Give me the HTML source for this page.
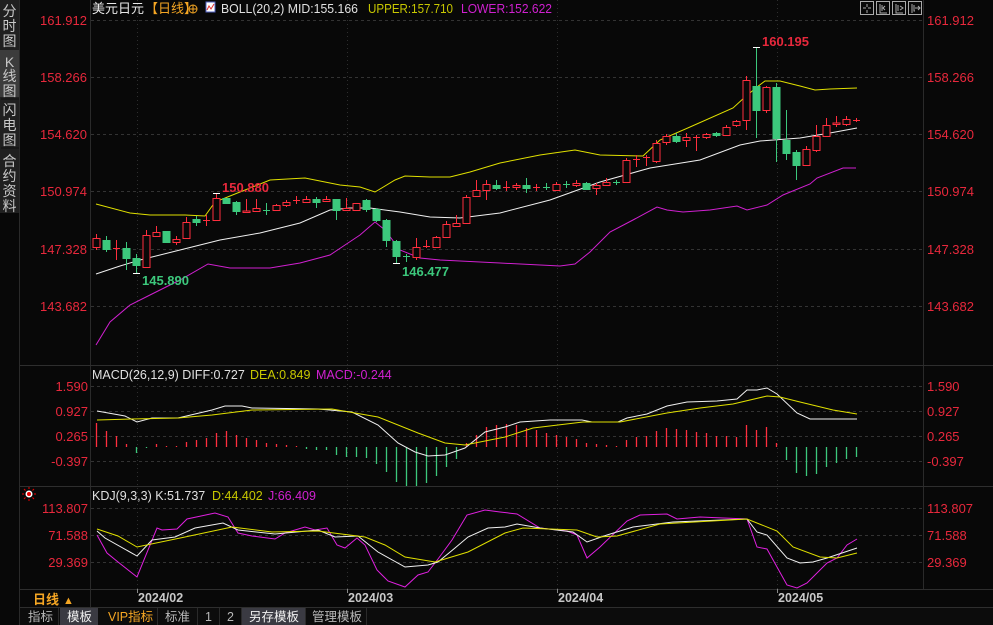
<!DOCTYPE html>
<html><head><meta charset="utf-8">
<style>
html,body{margin:0;padding:0;background:#080808;width:993px;height:625px;overflow:hidden}
svg{display:block}
text{font-family:"Liberation Sans","Noto Sans CJK SC",sans-serif}
</style></head><body>
<svg width="993" height="625" viewBox="0 0 993 625" xmlns="http://www.w3.org/2000/svg">
<rect x="0" y="0" width="993" height="625" fill="#080808"/>
<!-- sidebar -->
<rect x="0" y="0" width="19" height="213" fill="#202020"/>
<rect x="0" y="50" width="19" height="47" fill="#3c3c3c"/>
<g fill="#c8c8c8" font-size="14" text-anchor="middle">
<text x="9.5" y="16">分</text><text x="9.5" y="31">时</text><text x="9.5" y="46">图</text>
<text x="9.5" y="67" font-family="Liberation Mono">K</text><text x="9.5" y="81">线</text><text x="9.5" y="96">图</text>
<text x="9.5" y="115">闪</text><text x="9.5" y="130">电</text><text x="9.5" y="145">图</text>
<text x="9.5" y="166">合</text><text x="9.5" y="181">约</text><text x="9.5" y="196">资</text><text x="9.5" y="211">料</text>
</g>
<line x1="1" y1="99" x2="19" y2="99" stroke="#111"/><line x1="1" y1="148" x2="19" y2="148" stroke="#111"/>
<line x1="19.5" y1="0" x2="19.5" y2="625" stroke="#2a2a2a"/>
<!-- frame lines -->
<line x1="90.5" y1="0" x2="90.5" y2="589" stroke="#2a2a2a"/>
<line x1="923.5" y1="0" x2="923.5" y2="589" stroke="#2a2a2a"/>
<line x1="20" y1="365.5" x2="993" y2="365.5" stroke="#2e2e2e"/>
<line x1="20" y1="486.5" x2="993" y2="486.5" stroke="#2e2e2e"/>
<line x1="20" y1="589.5" x2="993" y2="589.5" stroke="#2e2e2e"/>
<line x1="20" y1="607.5" x2="993" y2="607.5" stroke="#2e2e2e"/>
<!-- grid -->
<g stroke="#333" stroke-dasharray="3,3">
<line x1="91" y1="20.5" x2="922" y2="20.5"/><line x1="91" y1="77.5" x2="922" y2="77.5"/><line x1="91" y1="134.5" x2="922" y2="134.5"/>
<line x1="91" y1="191.5" x2="922" y2="191.5"/><line x1="91" y1="249.5" x2="922" y2="249.5"/><line x1="91" y1="306.5" x2="922" y2="306.5"/>
<line x1="91" y1="386.5" x2="922" y2="386.5"/><line x1="91" y1="411.5" x2="922" y2="411.5"/><line x1="91" y1="436.5" x2="922" y2="436.5"/><line x1="91" y1="461.5" x2="922" y2="461.5"/>
<line x1="91" y1="508.5" x2="922" y2="508.5"/><line x1="91" y1="535.5" x2="922" y2="535.5"/><line x1="91" y1="562.5" x2="922" y2="562.5"/>
</g>
<g stroke="#2e2e2e" stroke-dasharray="1,3">
<line x1="137.5" y1="0" x2="137.5" y2="589"/><line x1="347.5" y1="0" x2="347.5" y2="589"/><line x1="557.5" y1="0" x2="557.5" y2="589"/><line x1="777.5" y1="0" x2="777.5" y2="589"/>
</g>
<!-- header -->
<text x="92" y="13" font-size="13" fill="#e8e8e8">美元日元</text>
<text x="145" y="13" font-size="13" fill="#f5a623">【日线】</text>
<circle cx="193" cy="9" r="4" fill="none" stroke="#f5a623"/><line x1="189" y1="9" x2="197" y2="9" stroke="#f5a623"/><line x1="193" y1="5" x2="193" y2="13" stroke="#f5a623"/>
<rect x="206" y="2" width="9" height="10" fill="#fff" stroke="#5060c0"/><polyline points="207,10 209,6 211,9 214,4" fill="none" stroke="#e03030"/>
<text x="221" y="13" font-size="12.5" fill="#e0e0e0" textLength="137" lengthAdjust="spacingAndGlyphs">BOLL(20,2) MID:155.166</text>
<text x="368" y="13" font-size="12.5" fill="#c8c800" textLength="85" lengthAdjust="spacingAndGlyphs">UPPER:157.710</text>
<text x="461" y="13" font-size="12.5" fill="#d020d0" textLength="91" lengthAdjust="spacingAndGlyphs">LOWER:152.622</text>
<!-- top-right icons -->
<g fill="none" stroke="#aaa">
<rect x="860.5" y="1.5" width="13" height="13"/><rect x="876.5" y="1.5" width="13" height="13"/><rect x="892.5" y="1.5" width="13" height="13"/><rect x="908.5" y="1.5" width="13" height="13"/>
<path d="M867 4v3M867 10v3M863 8h3M868 8h3"/><path d="M880 4v9h7M882 5v6M885 6l-2 2 2 2"/><path d="M896 4v9h7M898 5v6M900 6l3 2-3 2"/><path d="M912 4v9M914 5v6h1M915 8h5M918 6l2 2-2 2"/>
</g>
<!-- left axis labels -->
<g font-size="13" fill="#e8283c" text-anchor="end">
<text x="87" y="25">161.912</text><text x="87" y="82">158.266</text><text x="87" y="139">154.620</text><text x="87" y="196">150.974</text><text x="87" y="254">147.328</text><text x="87" y="311">143.682</text>
<text x="88" y="391">1.590</text><text x="88" y="416">0.927</text><text x="88" y="441">0.265</text><text x="88" y="466">-0.397</text>
<text x="88" y="513">113.807</text><text x="88" y="540">71.588</text><text x="88" y="567">29.369</text>
</g>
<g font-size="13" fill="#e8283c">
<text x="927" y="25">161.912</text><text x="927" y="82">158.266</text><text x="927" y="139">154.620</text><text x="927" y="196">150.974</text><text x="927" y="254">147.328</text><text x="927" y="311">143.682</text>
<text x="927" y="391">1.590</text><text x="927" y="416">0.927</text><text x="927" y="441">0.265</text><text x="927" y="466">-0.397</text>
<text x="927" y="513">113.807</text><text x="927" y="540">71.588</text><text x="927" y="567">29.369</text>
</g>
<!-- BOLL lines -->
<polyline fill="none" stroke="#e0e000" stroke-width="1" points="96,204 130,213 150,215 185,215 205,216 215,202 240,192 270,180 305,178 330,183 340,185 360,187 375,192 395,180 405,176 430,177 450,177 470,172 500,163 540,155 575,150 600,155 643,156 660,140 690,127 733,108 745,97 757,87 765,81 780,81 800,86 815,90 830,89 857,88"/>
<polyline fill="none" stroke="#f0f0f0" stroke-width="1" points="96,274 120,266 140,260 180,250 220,240 260,233 300,223 330,210 350,208 370,208 400,212 430,217 460,218 500,213 550,200 600,182 650,168 700,160 740,145 760,141 800,138 830,133 857,128"/>
<polyline fill="none" stroke="#d020d0" stroke-width="1" points="96,345 110,322 130,305 150,295 180,280 208,264 230,268 270,268 300,263 330,255 345,245 360,235 375,222 385,230 400,250 420,258 440,260 500,263 560,266 575,264 590,252 610,232 633,220 657,207 667,210 683,212 710,210 737,206 747,210 767,205 783,195 810,184 817,178 843,168 856,168"/>
<!-- candles -->
<g stroke-width="1">
<g stroke="#ff2e3e" fill="#080808">
<line x1="96.5" y1="234" x2="96.5" y2="250"/><rect x="93" y="238.5" width="7" height="9"/>
<line x1="116.5" y1="240" x2="116.5" y2="260"/><line x1="113" y1="248.5" x2="120" y2="248.5"/>
<line x1="146.5" y1="230" x2="146.5" y2="235"/><rect x="143" y="235.5" width="7" height="32"/>
<line x1="156.5" y1="226" x2="156.5" y2="237"/><rect x="153" y="232.5" width="7" height="4"/>
<line x1="176.5" y1="236" x2="176.5" y2="245"/><rect x="173" y="239.5" width="7" height="3"/>
<line x1="186.5" y1="217" x2="186.5" y2="222"/><rect x="183" y="222.5" width="7" height="16"/>
<line x1="206.5" y1="215" x2="206.5" y2="226"/><line x1="203" y1="220.5" x2="210" y2="220.5"/>
<line x1="216.5" y1="193" x2="216.5" y2="198"/><rect x="213" y="198.5" width="7" height="22"/>
<line x1="246.5" y1="199" x2="246.5" y2="212"/><rect x="243" y="211" width="7" height="1.5"/>
<line x1="256.5" y1="199" x2="256.5" y2="211"/><rect x="253" y="208.5" width="7" height="3"/>
<line x1="276.5" y1="204" x2="276.5" y2="210"/><rect x="273" y="205.5" width="7" height="5"/>
<line x1="286.5" y1="200" x2="286.5" y2="207"/><rect x="283" y="202.5" width="7" height="3"/>
<line x1="296.5" y1="196" x2="296.5" y2="204"/><line x1="293" y1="200.5" x2="300" y2="200.5"/>
<line x1="306.5" y1="196" x2="306.5" y2="203"/><rect x="303" y="199.5" width="7" height="3"/>
<line x1="326.5" y1="196" x2="326.5" y2="202"/><rect x="323" y="199.5" width="7" height="2"/>
<line x1="346.5" y1="198" x2="346.5" y2="211"/><rect x="343" y="208.5" width="7" height="2"/>
<rect x="353" y="203.5" width="7" height="7"/>
<line x1="416.5" y1="238" x2="416.5" y2="260"/><rect x="413" y="247.5" width="7" height="10"/>
<line x1="426.5" y1="240" x2="426.5" y2="248"/><line x1="423" y1="246.5" x2="430" y2="246.5"/>
<line x1="436.5" y1="236" x2="436.5" y2="248"/><rect x="433" y="237.5" width="7" height="10"/>
<line x1="446.5" y1="221" x2="446.5" y2="237"/><rect x="443" y="224.5" width="7" height="13"/>
<line x1="456.5" y1="215" x2="456.5" y2="227"/><rect x="453" y="223.5" width="7" height="3"/>
<line x1="466.5" y1="195" x2="466.5" y2="223"/><rect x="463" y="197.5" width="7" height="26"/>
<line x1="476.5" y1="180" x2="476.5" y2="197"/><rect x="473" y="190.5" width="7" height="6"/>
<line x1="486.5" y1="180" x2="486.5" y2="200"/><rect x="483" y="184.5" width="7" height="6"/>
<line x1="506.5" y1="181" x2="506.5" y2="191"/><line x1="503" y1="187.5" x2="510" y2="187.5"/>
<line x1="516.5" y1="183" x2="516.5" y2="190"/><rect x="513" y="185.5" width="7" height="2"/>
<line x1="536.5" y1="184" x2="536.5" y2="191"/><line x1="533" y1="187.5" x2="540" y2="187.5"/>
<line x1="556.5" y1="182" x2="556.5" y2="191"/><rect x="553" y="184.5" width="7" height="6"/>
<line x1="576.5" y1="180" x2="576.5" y2="187"/><rect x="573" y="183.5" width="7" height="2"/>
<line x1="596.5" y1="183" x2="596.5" y2="195"/><rect x="593" y="185.5" width="7" height="3"/>
<line x1="606.5" y1="178" x2="606.5" y2="186"/><rect x="603" y="182.5" width="7" height="3"/>
<line x1="626.5" y1="158" x2="626.5" y2="182"/><rect x="623" y="160.5" width="7" height="22"/>
<line x1="636.5" y1="155" x2="636.5" y2="167"/><line x1="633" y1="159.5" x2="640" y2="159.5"/>
<line x1="646.5" y1="155" x2="646.5" y2="166"/><line x1="643" y1="157.5" x2="650" y2="157.5"/>
<line x1="656.5" y1="140" x2="656.5" y2="163"/><rect x="653" y="143.5" width="7" height="18"/>
<line x1="666.5" y1="134" x2="666.5" y2="145"/><rect x="663" y="136.5" width="7" height="6"/>
<line x1="686.5" y1="133" x2="686.5" y2="147"/><rect x="683" y="137.5" width="7" height="3"/>
<line x1="696.5" y1="135" x2="696.5" y2="151"/><line x1="693" y1="137.5" x2="700" y2="137.5"/>
<line x1="706.5" y1="133" x2="706.5" y2="139"/><rect x="703" y="134.5" width="7" height="3"/>
<line x1="726.5" y1="125" x2="726.5" y2="135"/><rect x="723" y="127.5" width="7" height="8"/>
<line x1="736.5" y1="120" x2="736.5" y2="127"/><rect x="733" y="121.5" width="7" height="4"/>
<line x1="746.5" y1="76" x2="746.5" y2="130"/><rect x="743" y="80.5" width="7" height="40"/>
<line x1="766.5" y1="86" x2="766.5" y2="113"/><rect x="763" y="87.5" width="7" height="23"/>
<line x1="806.5" y1="146" x2="806.5" y2="166"/><rect x="803" y="149.5" width="7" height="16"/>
<line x1="816.5" y1="125" x2="816.5" y2="152"/><rect x="813" y="136.5" width="7" height="14"/>
<line x1="826.5" y1="118" x2="826.5" y2="137"/><rect x="823" y="125.5" width="7" height="11"/>
<line x1="836.5" y1="116" x2="836.5" y2="127"/><rect x="833" y="123" width="7" height="1.5"/>
<line x1="846.5" y1="116" x2="846.5" y2="126"/><rect x="843" y="119.5" width="7" height="5"/>
<line x1="856.5" y1="118" x2="856.5" y2="122"/><line x1="853" y1="120.5" x2="860" y2="120.5"/>
</g>
<g stroke="#3cc87c" fill="#3cc87c">
<line x1="106.5" y1="236" x2="106.5" y2="252"/><rect x="103" y="240.5" width="7" height="9"/>
<line x1="126.5" y1="242" x2="126.5" y2="270"/><rect x="123" y="248.5" width="7" height="10"/>
<line x1="136.5" y1="254" x2="136.5" y2="273"/><rect x="133" y="258.5" width="7" height="7"/>
<rect x="163" y="231.5" width="7" height="11"/>
<line x1="196.5" y1="216" x2="196.5" y2="226"/><rect x="193" y="219.5" width="7" height="3"/>
<rect x="223" y="198.5" width="7" height="5"/>
<line x1="236.5" y1="201" x2="236.5" y2="215"/><rect x="233" y="202.5" width="7" height="9"/>
<line x1="266.5" y1="203" x2="266.5" y2="215"/><line x1="263" y1="210.5" x2="270" y2="210.5"/>
<line x1="316.5" y1="197" x2="316.5" y2="208"/><rect x="313" y="199.5" width="7" height="3"/>
<line x1="336.5" y1="199" x2="336.5" y2="220"/><rect x="333" y="199.5" width="7" height="11"/>
<line x1="366.5" y1="199" x2="366.5" y2="212"/><rect x="363" y="200.5" width="7" height="9"/>
<line x1="376.5" y1="208" x2="376.5" y2="222"/><rect x="373" y="209.5" width="7" height="11"/>
<line x1="386.5" y1="219" x2="386.5" y2="247"/><rect x="383" y="220.5" width="7" height="20"/>
<line x1="396.5" y1="240" x2="396.5" y2="263"/><rect x="393" y="241.5" width="7" height="15"/>
<line x1="406.5" y1="254" x2="406.5" y2="262"/><line x1="403" y1="256.5" x2="410" y2="256.5"/>
<line x1="496.5" y1="180" x2="496.5" y2="190"/><rect x="493" y="185.5" width="7" height="3"/>
<line x1="526.5" y1="178" x2="526.5" y2="193"/><rect x="523" y="185.5" width="7" height="3"/>
<line x1="546.5" y1="183" x2="546.5" y2="190"/><line x1="543" y1="187.5" x2="550" y2="187.5"/>
<line x1="566.5" y1="181" x2="566.5" y2="188"/><line x1="563" y1="184.5" x2="570" y2="184.5"/>
<line x1="586.5" y1="182" x2="586.5" y2="190"/><rect x="583" y="183.5" width="7" height="6"/>
<line x1="616.5" y1="180" x2="616.5" y2="185"/><line x1="613" y1="182.5" x2="620" y2="182.5"/>
<line x1="676.5" y1="133" x2="676.5" y2="143"/><rect x="673" y="136.5" width="7" height="5"/>
<line x1="716.5" y1="132" x2="716.5" y2="137"/><rect x="713" y="133.5" width="7" height="2"/>
<line x1="756.5" y1="47" x2="756.5" y2="138"/><rect x="753" y="86.5" width="7" height="24"/>
<line x1="776.5" y1="83" x2="776.5" y2="162"/><rect x="773" y="87.5" width="7" height="51"/>
<line x1="786.5" y1="110" x2="786.5" y2="160"/><rect x="783" y="140.5" width="7" height="13"/>
<line x1="796.5" y1="150" x2="796.5" y2="180"/><rect x="793" y="152.5" width="7" height="13"/>
</g>
<g stroke="#fff"><line x1="753" y1="47.5" x2="760" y2="47.5"/><line x1="213" y1="193.5" x2="220" y2="193.5"/><line x1="133" y1="273.5" x2="140" y2="273.5"/><line x1="393" y1="263.5" x2="400" y2="263.5"/></g>
</g>
<g font-size="13" font-weight="bold">
<text x="762" y="46" fill="#e8283c">160.195</text>
<text x="222" y="192" fill="#e8283c">150.880</text>
<text x="142" y="285" fill="#3cc87c">145.890</text>
<text x="402" y="276" fill="#3cc87c">146.477</text>
</g>
<!-- MACD -->
<text x="92" y="379" font-size="12.5" fill="#e0e0e0">MACD(26,12,9) DIFF:0.727</text>
<text x="250" y="379" font-size="12.5" fill="#c8c800">DEA:0.849</text>
<text x="316" y="379" font-size="12.5" fill="#d020d0">MACD:-0.244</text>
<g stroke="#ff2e3e" stroke-width="1.3">
<path d="M96.5 447V423M106.5 447V431M116.5 447V436M126.5 447V444M156.5 447V444M166.5 447V446M176.5 447V446M186.5 447V442M196.5 447V440M206.5 447V438M216.5 447V433M226.5 447V431M236.5 447V435M246.5 447V438M256.5 447V440M266.5 447V443M276.5 447V444M286.5 447V445M296.5 447V446"/>
<path d="M466.5 447V443M476.5 447V435M486.5 447V427M496.5 447V425M506.5 447V424M516.5 447V425M526.5 447V428M536.5 447V430M546.5 447V433M556.5 447V435M566.5 447V437M576.5 447V439M586.5 447V443M596.5 447V444M606.5 447V445M616.5 447V446M626.5 447V440M636.5 447V437M646.5 447V436M656.5 447V431M666.5 447V428M676.5 447V429M686.5 447V430M696.5 447V432M706.5 447V433M716.5 447V436M726.5 447V436M736.5 447V437M746.5 447V425M756.5 447V430M766.5 447V427M776.5 447V443"/>
</g>
<g stroke="#3cc87c" stroke-width="1.3">
<path d="M136.5 447V453M146.5 447V448M306.5 447V449M316.5 447V450M326.5 447V450M336.5 447V455M346.5 447V457M356.5 447V457M366.5 447V458M376.5 447V464M386.5 447V472M396.5 447V482M406.5 447V486M416.5 447V486M426.5 447V483M436.5 447V476M446.5 447V467M456.5 447V459"/>
<path d="M786.5 447V460M796.5 447V473M806.5 447V476M816.5 447V474M826.5 447V467M836.5 447V463M846.5 447V459M856.5 447V457"/>
</g>
<polyline fill="none" stroke="#f0f0f0" points="97,411 125,416 137,422 152,418 178,418 195,414 212,410 225,406 242,406 252,408 318,409 352,412 378,425 398,443 415,452 428,456 445,455 465,448 485,432 505,427 520,422 550,420 582,420 592,422 618,422 627,418 647,414 667,406 687,402 717,401 737,399 747,390 757,390 767,388 777,394 797,413 810,419 857,419"/>
<polyline fill="none" stroke="#e0e000" points="97,420 132,419 178,418 212,415 252,410 332,409 378,417 418,433 445,443 465,445 505,437 533,428 583,422 620,422 667,413 700,408 733,404 767,396 780,397 800,402 833,410 857,414"/>
<!-- KDJ -->
<g transform="translate(29,494)"><circle r="3.5" fill="#fff"/><circle r="2" fill="#e00"/><g stroke="#e00" stroke-width="1"><path d="M0-7v2M0 5v2M-7 0h2M5 0h2M-5-5l1.5 1.5M5-5l-1.5 1.5M-5 5l1.5-1.5M5 5l-1.5-1.5"/></g></g>
<text x="92" y="500" font-size="12.5" fill="#e0e0e0">KDJ(9,3,3) K:51.737</text>
<text x="212" y="500" font-size="12.5" fill="#c8c800">D:44.402</text>
<text x="268" y="500" font-size="12.5" fill="#d020d0">J:66.409</text>
<polyline fill="none" stroke="#e020e0" points="97,535 107,553 118,562 137,577 157,528 162,530 177,529 187,519 215,513 228,517 238,533 252,536 275,539 285,533 305,527 315,530 327,528 337,545 345,548 357,538 365,545 377,570 388,581 405,587 418,575 428,572 438,559 452,540 467,515 485,510 500,512 517,514 540,528 567,531 577,535 587,558 600,547 627,521 640,515 667,514 677,519 700,517 747,519 757,547 767,549 787,585 797,588 807,583 827,563 837,558 847,545 857,539"/>
<polyline fill="none" stroke="#f0f0f0" points="97,531 105,538 137,556 152,540 175,537 195,528 223,523 238,530 275,534 318,530 335,537 358,536 378,552 405,567 428,565 438,562 455,548 468,537 488,528 505,527 517,524 540,528 573,532 587,542 607,535 633,527 673,522 747,519 757,532 767,535 787,558 800,563 813,562 827,558 857,548"/>
<polyline fill="none" stroke="#e0e000" points="97,529 118,536 137,547 185,537 232,527 272,532 318,531 365,537 385,545 405,557 435,562 468,552 505,533 523,528 577,530 597,537 617,536 660,524 747,519 777,531 793,547 820,557 837,558 857,553"/>
<!-- date row -->
<text x="33" y="604" font-size="13" font-weight="bold" fill="#f5a623">日线</text>
<text x="63" y="604" font-size="11" fill="#f5a623">▲</text>
<line x1="90.5" y1="589" x2="90.5" y2="607" stroke="#2a2a2a"/>
<line x1="137.5" y1="589" x2="137.5" y2="593" stroke="#888"/><line x1="347.5" y1="589" x2="347.5" y2="593" stroke="#888"/><line x1="557.5" y1="589" x2="557.5" y2="593" stroke="#888"/><line x1="777.5" y1="589" x2="777.5" y2="593" stroke="#888"/>
<g font-size="12.5" font-weight="bold" fill="#c8c8c8">
<text x="138" y="602">2024/02</text><text x="348" y="602">2024/03</text><text x="558" y="602">2024/04</text><text x="778" y="602">2024/05</text>
</g>
<!-- bottom tabs -->
<rect x="20" y="608" width="973" height="17" fill="#0c0c0c"/>
<rect x="60" y="608" width="38" height="17" fill="#3a3a42"/>
<rect x="242" y="608" width="63" height="17" fill="#3a3a42"/>
<g stroke="#2a2a2a"><line x1="58.5" y1="608" x2="58.5" y2="625"/><line x1="157.5" y1="608" x2="157.5" y2="625"/><line x1="197.5" y1="608" x2="197.5" y2="625"/><line x1="219.5" y1="608" x2="219.5" y2="625"/><line x1="241.5" y1="608" x2="241.5" y2="625"/><line x1="305.5" y1="608" x2="305.5" y2="625"/><line x1="366.5" y1="608" x2="366.5" y2="625"/></g>
<g font-size="12.5" fill="#b8b8b8">
<text x="28" y="621">指标</text>
<text x="67" y="621" fill="#f0f0f0">模板</text>
<text x="108" y="621" fill="#f5a623">VIP指标</text>
<text x="165" y="621">标准</text>
<text x="205" y="621">1</text>
<text x="227" y="621">2</text>
<text x="249" y="621" fill="#f0f0f0">另存模板</text>
<text x="312" y="621">管理模板</text>
</g>
</svg>
</body></html>
